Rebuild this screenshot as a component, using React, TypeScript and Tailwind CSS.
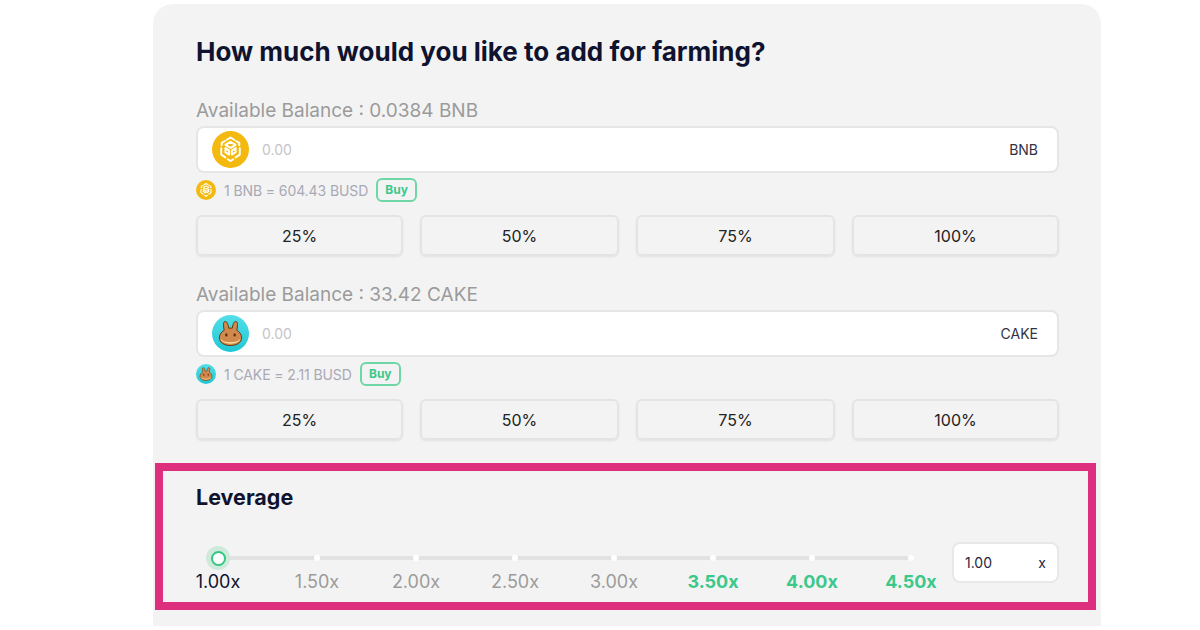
const percents = ['25%', '50%', '75%', '100%']
const marks = [
  { label: '1.00x', tone: 'font-normal text-[#0f1330]' },
  { label: '1.50x', tone: 'font-normal text-[#9b9b9b]' },
  { label: '2.00x', tone: 'font-normal text-[#9b9b9b]' },
  { label: '2.50x', tone: 'font-normal text-[#9b9b9b]' },
  { label: '3.00x', tone: 'font-normal text-[#9b9b9b]' },
  { label: '3.50x', tone: 'font-bold text-[#3cc88a]' },
  { label: '4.00x', tone: 'font-bold text-[#3cc88a]' },
  { label: '4.50x', tone: 'font-bold text-[#3cc88a]' },
]

function BnbIcon({ className }: { className: string }) {
  return (
    <svg viewBox="0 0 40 40" className={className} aria-hidden="true">
      <circle cx="20" cy="20" r="20" fill="#f3b90f" />
      <g fill="none" stroke="#fff" strokeWidth="2.1" strokeLinejoin="round" strokeLinecap="round">
        <path d="M16 9.500 20 7l4 2.500" />
        <path d="M10.500 15.500v-2.700l3.500-2" />
        <path d="M29.500 15.500v-2.700l-3.500-2" />
        <path d="M14.500 15 20 11.800l5.500 3.200L20 18.200z" />
        <path d="M14.500 18.500v4.500l4 2.500v-4.300z" />
        <path d="M25.500 18.500v4.500l-4 2.500v-4.300z" />
        <path d="M10 18.500v7l4.500 3" />
        <path d="M30 18.500v7l-4.500 3" />
        <path d="M17 30.500l3 2 3-2" />
      </g>
    </svg>
  )
}

function CakeIcon({ className }: { className: string }) {
  return (
    <svg viewBox="0 0 40 40" className={className} aria-hidden="true">
      <defs>
        <linearGradient id="cakeBg" x1="0" y1="0" x2="0" y2="1">
          <stop offset="0" stopColor="#53dee9" />
          <stop offset="1" stopColor="#1fc7d4" />
        </linearGradient>
      </defs>
      <circle cx="20" cy="20" r="20" fill="url(#cakeBg)" />
      <path
        d="M13.200 16.500c-1-4.500-1.300-9.500 1-9.500 2.400 0 3.400 3.700 3.900 7.300a14 14 0 0 1 3.800 0C22.400 10.700 23.400 7 25.800 7c2.300 0 2 5 1 9.500 3 1.800 5.200 4.500 5.200 8 0 5.500-5.400 8.500-12 8.500S8 30 8 24.500c0-3.500 2.200-6.200 5.200-8z"
        fill="#d1884f"
        stroke="#633001"
        strokeWidth="1"
      />
      <path d="M9 25.500c1 3.500 5.500 5.500 11 5.500s10-2 11-5.500c-2 3-6 4-11 4s-9-1-11-4z" fill="#fee3a0" />
      <ellipse cx="15.500" cy="21.500" rx="1.300" ry="1.800" fill="#633001" />
      <ellipse cx="24.500" cy="21.500" rx="1.300" ry="1.800" fill="#633001" />
    </svg>
  )
}

function TokenPanel({
  balance,
  symbol,
  rate,
  Icon,
}: {
  balance: string
  symbol: string
  rate: string
  Icon: typeof BnbIcon
}) {
  return (
    <div>
      <p className="text-[19px] leading-[27px] text-[#9b9b9b]">Available Balance : {balance}</p>
      <div className="mt-[2px] flex h-[47px] items-center rounded-[8px] border-2 border-[#e6e6e6] bg-white pr-[19px] pl-[14px]">
        <Icon className="h-[37px] w-[37px]" />
        <span className="ml-[13px] text-[14px] text-[#c4c4cc]">0.00</span>
        <span className="ml-auto text-[14px] text-[#2f3345]">{symbol}</span>
      </div>
      <div className="mt-[5px] flex h-[24px] items-center">
        <Icon className="h-[20px] w-[20px]" />
        <span className="ml-[8px] text-[14px] tracking-[-0.1px] text-[#a9a9b5]">{rate}</span>
        <span className="ml-[8px] flex h-[24px] w-[41px] items-center justify-center rounded-[6px] border-2 border-[#6fd6a8] text-[12px] font-bold text-[#3cc88a]">
          Buy
        </span>
      </div>
      <div className="mt-[13px] flex gap-[17px]">
        {percents.map((percent, index) => (
          <button
            key={percent}
            type="button"
            className={`h-[41px] rounded-[6px] border-2 border-[#e4e4e4] text-[16px] text-[#222222] shadow-[0_1px_2px_rgba(0,0,0,0.08)] ${
              index === 0 || index === 3 ? 'w-[207px]' : 'w-[199px]'
            }`}
          >
            {percent}
          </button>
        ))}
      </div>
    </div>
  )
}

export default function App() {
  return (
    <div className="h-[630px] w-[1200px] overflow-hidden bg-white pt-[4px] pl-[153px] font-['Inter',sans-serif]">
      <div className="h-[622px] w-[948px] rounded-t-[20px] bg-[#f3f3f3]">
        <div className="pt-[32px] pl-[43px]">
          <h1 className="text-[26px] leading-[32px] font-bold text-[#0f1330]">
            How much would you like to add for farming?
          </h1>
          <div className="mt-[29px] flex w-[863px] flex-col gap-[25px]">
            <TokenPanel balance="0.0384 BNB" symbol="BNB" rate="1 BNB = 604.43 BUSD" Icon={BnbIcon} />
            <TokenPanel balance="33.42 CAKE" symbol="CAKE" rate="1 CAKE = 2.11 BUSD" Icon={CakeIcon} />
          </div>
        </div>
        <section className="mt-[23px] ml-[2px] h-[147px] w-[941px] border-[8px] border-[#de2f7f] pt-[11px] pl-[33px]">
          <h2 className="text-[21.5px] leading-[30px] font-bold text-[#0f1330]">Leverage</h2>
          <div className="mt-[30px] flex items-start">
            <div className="w-[742px] pl-[22px]">
              <div className="relative h-[4px] w-[693px] translate-y-[14px] bg-[#e2e2e2]">
                {marks.slice(1).map((mark, index) => (
                  <span
                    key={mark.label}
                    className="absolute top-[-1px] h-[6px] w-[6px] -translate-x-1/2 rounded-full bg-white"
                    style={{ left: `${(index + 1) * 99}px` }}
                  />
                ))}
                <span className="absolute top-[-10px] left-[-12px] flex h-[24px] w-[24px] items-center justify-center rounded-full bg-[#cdeadb]">
                  <span className="h-[15px] w-[15px] rounded-full border-2 border-[#35c585] bg-white" />
                </span>
              </div>
              <div className="mt-[22px] flex w-[693px] justify-between">
                {marks.map((mark) => (
                  <span key={mark.label} className="flex w-0 justify-center">
                    <span className={`text-[18px] leading-[27px] whitespace-nowrap ${mark.tone}`}>{mark.label}</span>
                  </span>
                ))}
              </div>
            </div>
            <div className="ml-[14px] flex h-[41px] w-[107px] items-center justify-between rounded-[8px] border-2 border-[#e8e8e8] bg-white pr-[11px] pl-[11px] text-[14px] text-[#1f2540]">
              <span>1.00</span>
              <span>x</span>
            </div>
          </div>
        </section>
      </div>
    </div>
  )
}
